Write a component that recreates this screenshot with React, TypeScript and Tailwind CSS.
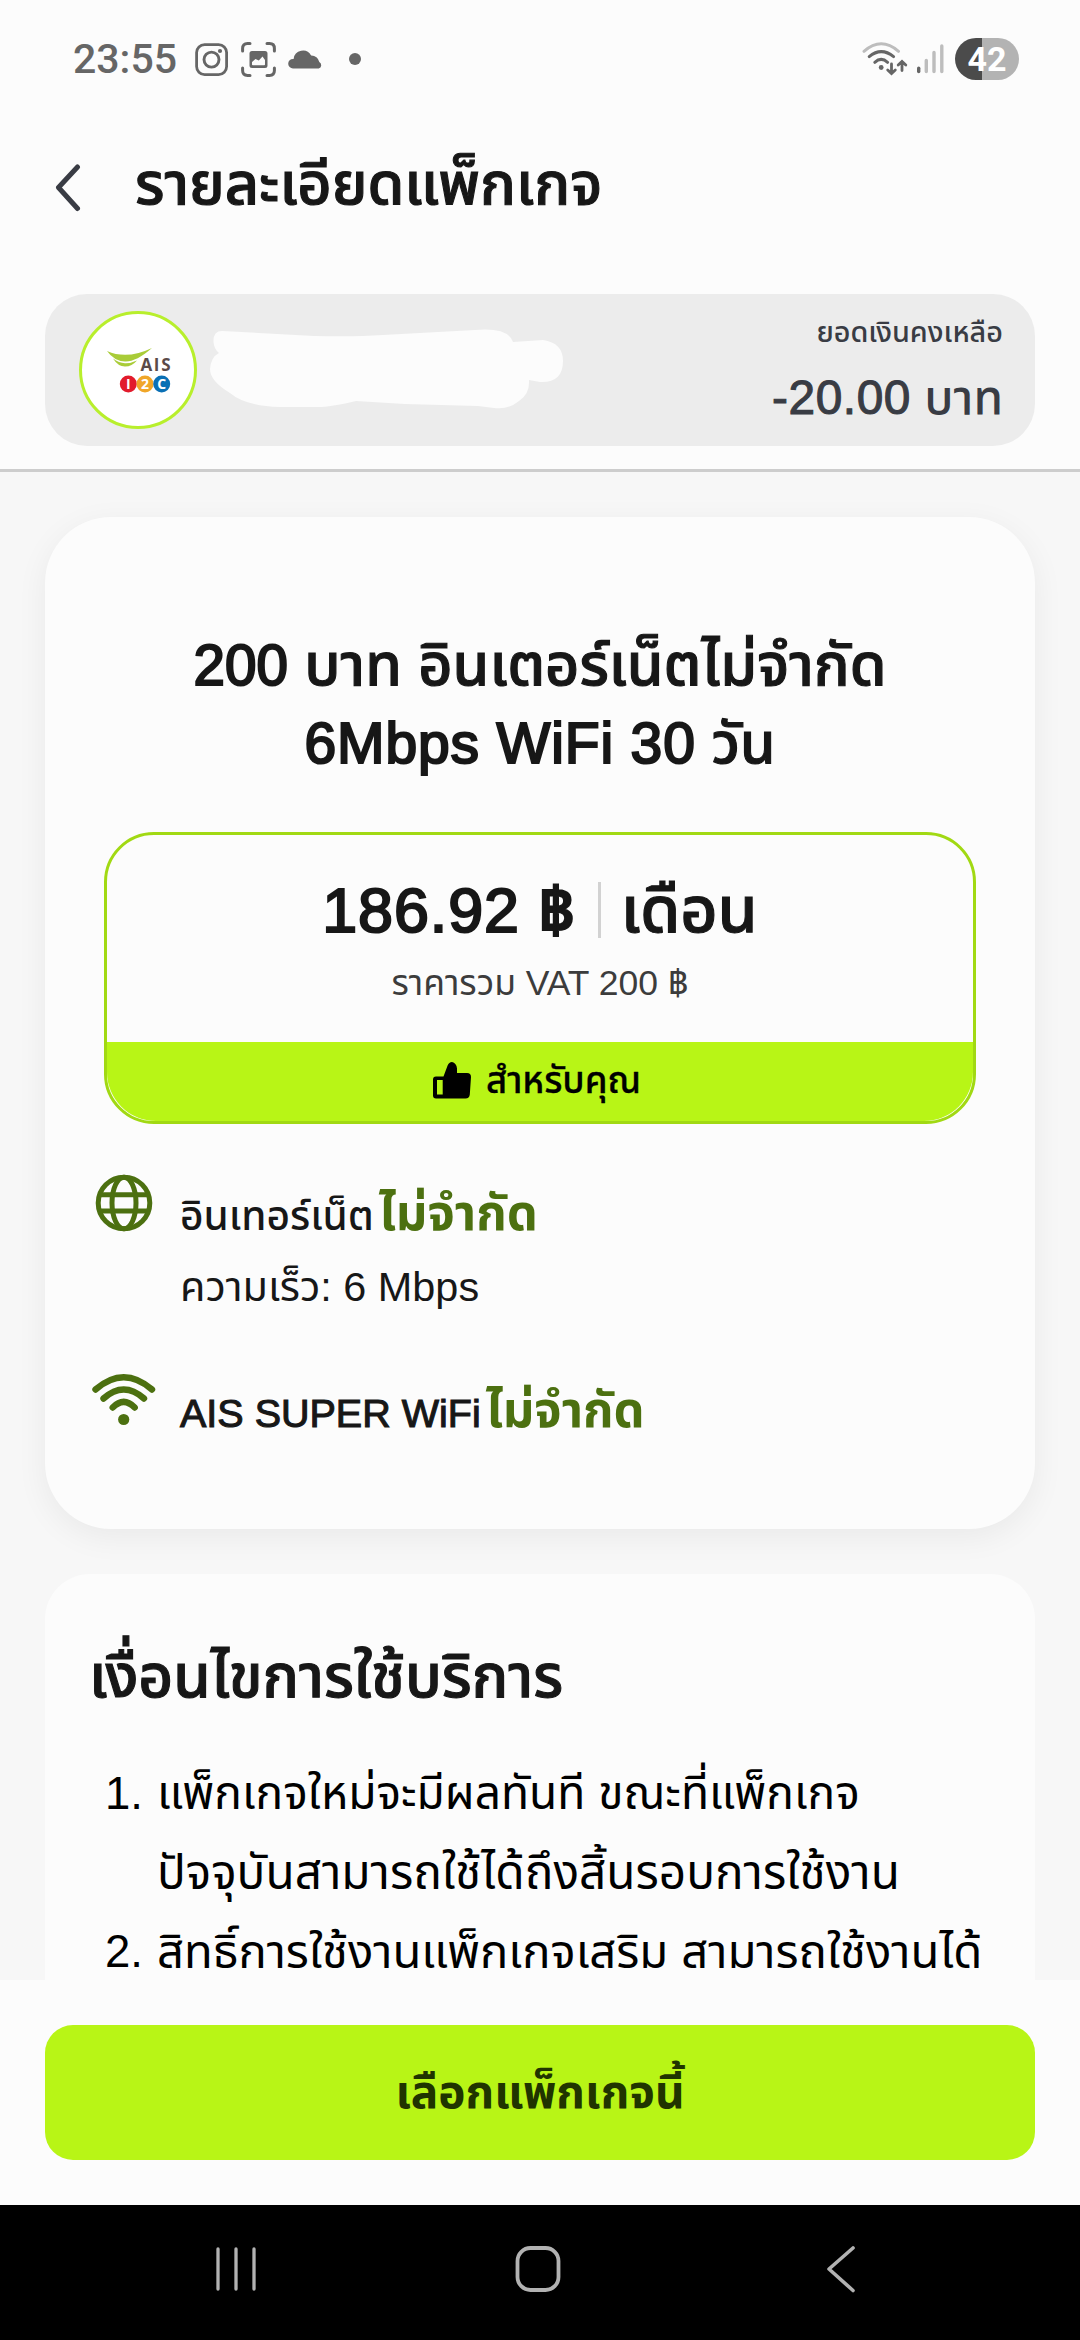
const sans = 'font-["Liberation_Sans","Noto_Sans_Thai",sans-serif]';
const semibold = 'font-medium [-webkit-text-stroke:1.1px_currentColor]';
const latinSemibold = '[-webkit-text-stroke-width:2.2px] tracking-[0.015em]';
const latinMedium = '[-webkit-text-stroke:1.1px_currentColor]';

function StatusBar() {
  return (
    <div className="flex h-[118px] items-center justify-between pl-[73px] pr-[61px] text-[#666666]">
      <div className="flex items-center">
        <span className='w-[122px] font-["Roboto",sans-serif] text-[41px] font-medium leading-[48px]'>23:55</span>
        <svg width="34" height="34" viewBox="0 0 34 34" fill="none" stroke="currentColor" className="mt-px">
          <rect x="1.6" y="1.6" width="30" height="30" rx="8" strokeWidth="2.8" />
          <circle cx="16.5" cy="16.6" r="7.5" strokeWidth="2.9" />
          <circle cx="25" cy="8" r="2.1" fill="currentColor" stroke="none" />
        </svg>
        <svg width="36" height="36" viewBox="0 0 36 36" fill="none" stroke="currentColor" className="ml-3 mt-px">
          <path d="M1.6 9V6.5Q1.6 1.6 6.5 1.6H9M26 1.6h2.500q4.900 0 4.900 4.900V9M33.400 26v2.500q0 4.900-4.900 4.900H26M9 33.400H6.500q-4.900 0-4.900-4.900V26" strokeWidth="3" strokeLinecap="round" />
          <path fillRule="evenodd" fill="currentColor" stroke="none" d="M11 9h13q2.500 0 2.500 2.500v12q0 2.500-2.500 2.500H11q-2.500 0-2.500-2.500v-12Q8.500 9 11 9zM11 22.500q0 .8.800.8h11.400q.8 0 .8-.8V18l-2.500-3.500-3.700 4-3.300-1.500-3.500 3z" />
        </svg>
        <svg width="36" height="22" viewBox="0 0 36 22" fill="currentColor" className="ml-[11px]">
          <path d="M5 20.500a4.800 4.800 0 0 1 0-9.600h.6a9.400 9.400 0 0 1 17.500-3.500 8 8 0 0 1 8.200 6.600 3.500 3.500 0 0 1-.6 6.500z" />
        </svg>
        <span className="ml-[25px] size-3 rounded-full bg-[#666666]" />
      </div>
      <div className="flex items-center">
        <svg width="86" height="42" viewBox="860 38 86 42" fill="none" stroke="currentColor" strokeLinecap="round">
          <path d="M863 51.300Q880.200 36.300 897.500 51.300" stroke="#bdbdbd" strokeWidth="3" />
          <path d="M868.200 56.600Q880.200 46.600 892.600 56.600M873.800 62.300Q880.200 56.500 886.600 62.300" strokeWidth="3" />
          <circle cx="880.200" cy="67.500" r="2.400" fill="currentColor" stroke="none" />
          <path d="M890.500 64v9.500M886.700 70l3.800 3.600 3.800-3.600M901 70.500V61.500M897.200 65l3.800-3.600 3.800 3.600" strokeWidth="2.800" />
          <path d="M917.700 68.300v3.200" strokeWidth="3.400" />
          <path d="M925.300 60.500v11M933 52.500v19M940.800 46v25.500" stroke="#bdbdbd" strokeWidth="3.400" />
        </svg>
        <div className='ml-2 flex h-[42px] w-16 items-center justify-center rounded-full bg-[linear-gradient(90deg,#4b4b4b_27px,#b3b3b3_27px)] font-["Roboto",sans-serif] text-[34px] font-bold leading-none text-white'>
          42
        </div>
      </div>
    </div>
  );
}

function BrandLogo() {
  return (
    <svg width="118" height="118" viewBox="0 0 118 118" className='shrink-0 font-["Open_Sans",sans-serif]'>
      <circle cx="59" cy="59" r="57.500" fill="#fff" stroke="#b8ef2c" strokeWidth="3" />
      <path d="M28 40Q48 49 73 37 57 51 46 50.500 35 50 28 40z" fill="#a9cc38" />
      <path d="M34 47.500q6 4.500 12 4.700 6 .2 12-2.700-5 6-12 6t-12-8z" fill="#a9cc38" />
      <text x="61.500" y="60.300" fontSize="17" fontWeight="700" fill="#5a4a48" textLength="30">AIS</text>
      <circle cx="49.300" cy="73" r="8.500" fill="#e21b2c" />
      <circle cx="66" cy="73" r="8.500" fill="#f0a628" />
      <circle cx="82.700" cy="73" r="8.500" fill="#0a70b5" />
      <g fontSize="14" fontWeight="700" fill="#fff" textAnchor="middle">
        <text x="49.300" y="78">I</text>
        <text x="66" y="78">2</text>
        <text x="82.700" y="78">C</text>
      </g>
    </svg>
  );
}

function GlobeIcon() {
  return (
    <svg width="58" height="58" viewBox="0 0 58 58" fill="none" stroke="#4c7010" strokeWidth="5">
      <circle cx="29" cy="29" r="25.800" />
      <ellipse cx="29" cy="29" rx="12" ry="25.800" />
      <path d="M5 20.800h48M5 37h48" />
    </svg>
  );
}

function WifiIcon() {
  return (
    <svg width="64" height="54" viewBox="92 1372 64 54" fill="none" stroke="#4c7010" strokeWidth="6.400" strokeLinecap="round">
      <path d="M95.500 1389.500Q123.700 1365 152 1389.500M103.500 1398.500Q123.700 1380.500 144 1398.500M112.700 1407.500Q123.700 1396.500 134.700 1407.500" />
      <circle cx="123.700" cy="1419.500" r="5.600" fill="#4c7010" stroke="none" />
    </svg>
  );
}

function ThumbIcon() {
  return (
    <svg width="38" height="37" viewBox="0 0 38 37" fill="#000">
      <path fillRule="evenodd" d="M3 14.600H10.500L14.600 3.500Q16 0 19 0q4.500 1 5 6.500V11H34q4 0 4 4l-1.200 17.500q-.4 4-4.300 4H3q-3 0-3-3v-16q0-2.900 3-2.900zM4 18v14.500h5.700V18z" />
    </svg>
  );
}

export default function App() {
  return (
    <div className={`flex h-[2340px] w-[1080px] flex-col overflow-hidden bg-[#fcfcfc] text-[#171717] ${sans}`}>
      <StatusBar />

      <header className="flex h-[176px] shrink-0 items-start pl-[55px] pt-[26px]">
        <svg width="26" height="48" viewBox="55 164 26 48" fill="none" stroke="#393c44" strokeWidth="5" strokeLinecap="round" strokeLinejoin="round" className="mt-[20px]">
          <path d="M77.500 167 58.500 187.500 77.500 208.500" />
        </svg>
        <h1 className={`ml-[54px] text-[59.300px] leading-[80px] whitespace-nowrap ${semibold}`}>รายละเอียดแพ็กเกจ</h1>
      </header>

      <section className="mx-[45px] flex h-[152px] shrink-0 items-center rounded-[42px] bg-[#ececec] pl-[34px] pr-[32px] text-[#393c44]">
        <BrandLogo />
        <svg width="365" height="90" viewBox="0 0 365 90" className="ml-2" fill="#fcfcfc">
          <path d="M8.500 17Q8 6 17 6L109 11Q150 12 178 10L270 5Q303 2 308 17L338 15Q358 18 358 36 358 58 335 57L324 55Q325 69 314 76 303 85 289 83L273 81 200 79 151 76Q125 82 113 82H75Q40 81 25 68 5 56 5 44 6 32 14 28 9 24 8.500 17z" />
        </svg>
        <div className="ml-auto flex flex-col items-end gap-4 whitespace-nowrap font-medium">
          <span className="text-[28.800px] leading-10">ยอดเงินคงเหลือ</span>
          <span className="text-[47.800px] leading-[60px]">
            <span className={`tracking-[0.012em] ${latinMedium}`}>-20.00</span> บาท
          </span>
        </div>
      </section>

      <main className="mt-[23px] min-h-0 flex-1 overflow-hidden border-t-[3px] border-[#cdcdcd] bg-[#f7f7f7] px-[45px] pt-[45px]">
        <article className="h-[1012px] rounded-[66px] bg-[#fcfcfc] pt-[108px] shadow-[0_8px_32px_rgba(0,0,0,0.06)]">
          <h2 className={`text-center leading-[79px] whitespace-nowrap ${semibold}`}>
            <span className="block h-[79px] text-[59.200px]">
              <span className="text-[56.500px] [-webkit-text-stroke-width:2.2px]">200</span> บาท อินเตอร์เน็ตไม่จำกัด
            </span>
            <span className="block h-[79px] text-[57px]">
              <span className={latinSemibold}>6Mbps WiFi 30</span> วัน
            </span>
          </h2>

          <div className="mx-auto mt-[49px] flex h-[292px] w-[872px] flex-col rounded-[50px] border-[3px] border-[#a1d913] pt-[35px]">
            <div className={`flex h-20 items-center justify-center text-[62.800px] leading-[80px] ${semibold}`}>
              <span className={latinSemibold}>186.92 ฿</span>
              <span className="ml-[22px] mr-[20px] h-14 w-[3px] bg-[#d2d2d2]" />
              <span className="text-[64.500px]">เดือน</span>
            </div>
            <p className="mt-2 text-center text-[35.500px] leading-[50px] text-[#3c3c3c]">ราคารวม VAT 200 ฿</p>
            <div className="mt-auto flex h-[79px] items-center justify-center gap-[15px] rounded-b-[49px] bg-[#b8f516] pb-[2px] pr-[6px] text-black">
              <ThumbIcon />
              <span className="text-[36.600px] font-medium leading-[50px] [-webkit-text-stroke:0.3px_currentColor]">สำหรับคุณ</span>
            </div>
          </div>

          <div className="mt-[50px] flex pl-[47px] whitespace-nowrap">
            <div className="flex w-16 justify-center"><GlobeIcon /></div>
            <div className="ml-[24px] mt-[12px]">
              <p className="h-[60px] text-[40.600px] font-medium leading-[60px]">
                อินเทอร์เน็ต<span className="ml-[5px] text-[49px] font-bold leading-none text-[#4c7010]">ไม่จำกัด</span>
              </p>
              <p className="mt-[11px] text-[41.400px] leading-[60px]">ความเร็ว: 6 Mbps</p>
            </div>
          </div>

          <div className="mt-[55px] flex pl-[47px] whitespace-nowrap">
            <WifiIcon />
            <p className="ml-[24px] mt-[11px] h-[60px] text-[39.500px] font-medium leading-[60px]">
              <span className={latinMedium}>AIS SUPER WiFi</span>
              <span className="ml-[5px] text-[49px] font-bold leading-none text-[#4c7010]">ไม่จำกัด</span>
            </p>
          </div>
        </article>

        <article className="mt-[45px] rounded-t-[45px] bg-[#fcfcfc] pl-[44px] pt-[63px]">
          <h2 className={`text-[60.200px] leading-[80px] whitespace-nowrap ${semibold}`}>เงื่อนไขการใช้บริการ</h2>
          <ol className="mt-[37px] pl-[16px] text-[47.200px] leading-[79px] text-black whitespace-nowrap">
            <li className="flex">
              <span className="w-[52px] shrink-0 text-[45.500px]">1.</span>
              <div>
                <span className="block h-[79px] text-[46.100px]">แพ็กเกจใหม่จะมีผลทันที ขณะที่แพ็กเกจ</span>
                <span className="block h-[79px] text-[47.700px]">ปัจจุบันสามารถใช้ได้ถึงสิ้นรอบการใช้งาน</span>
              </div>
            </li>
            <li className="flex">
              <span className="w-[52px] shrink-0 text-[45.500px]">2.</span>
              <span>สิทธิ์การใช้งานแพ็กเกจเสริม สามารถใช้งานได้</span>
            </li>
          </ol>
        </article>
      </main>

      <footer className="flex h-[225px] shrink-0 items-center px-[45px]">
        <button className="h-[135px] w-full rounded-[28px] bg-[#b8f516] text-[45.900px] font-bold text-[#203400]">เลือกแพ็กเกจนี้</button>
      </footer>

      <nav className="flex h-[135px] shrink-0 items-center bg-black pb-[7px]">
        <svg width="1080" height="60" viewBox="0 2239 1080 60" fill="none" stroke="#b2b2b2" strokeLinecap="round">
          <path d="M218 2249v40M236 2249v40M254 2249v40" strokeWidth="3.300" />
          <rect x="517.500" y="2248" width="41" height="42" rx="13" strokeWidth="3.800" />
          <path d="M853 2248 829 2269 853 2290.500" strokeWidth="3.600" strokeLinejoin="round" />
        </svg>
      </nav>
    </div>
  );
}
